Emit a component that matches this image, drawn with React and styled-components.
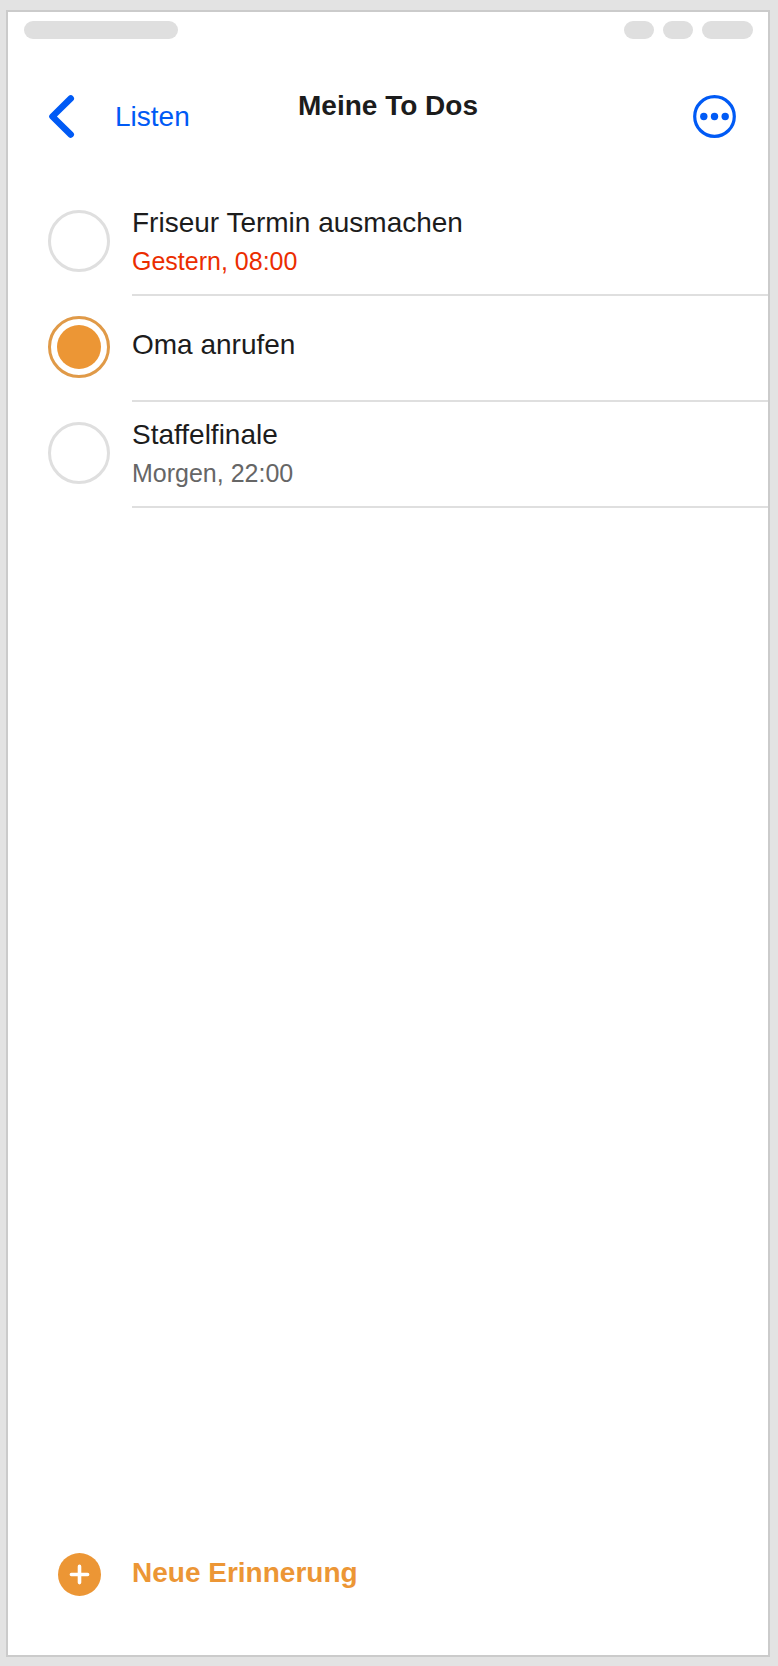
import React, { useState } from 'react';
import styled, { createGlobalStyle } from 'styled-components';

const GlobalStyle = createGlobalStyle`
  * {
    box-sizing: border-box;
  }
  body {
    margin: 0;
    background: #e3e3e3;
    color: #1c1c1c;
    font-family: "Liberation Sans", Arial, Helvetica, sans-serif;
    font-size: 28px;
    line-height: 32px;
  }
`;

const Page = styled.div`
  display: flex;
  min-height: 100vh;
  padding: 10px 8px 9px 6px;
`;

const Screen = styled.div`
  flex: 1;
  display: flex;
  flex-direction: column;
  background: #fff;
  border: 2px solid #cbcbcb;
`;

const StatusBar = styled.div`
  display: flex;
  gap: 9px;
  padding: 9px 15px 0 16px;
`;

const Pill = styled.span`
  width: ${(props) => props.$width}px;
  height: 18px;
  border-radius: 9px;
  background: #dfdfdf;
`;

const Spacer = styled.span`
  flex: 1;
`;

const Header = styled.header`
  display: grid;
  grid-template-columns: 1fr auto 1fr;
  align-items: start;
  padding: 56px 32px 52px 40px;
`;

const BackLink = styled.a`
  display: flex;
  align-items: center;
  gap: 40px;
  color: #005af5;
  text-decoration: none;
`;

const Title = styled.h1`
  margin: 0;
  padding-right: 8px;
  font-size: 28px;
  line-height: 22px;
  font-weight: bold;
`;

const IconButton = styled.button`
  display: flex;
  justify-self: end;
  padding: 0;
  border: none;
  background: none;
  color: #005af5;
  cursor: pointer;
`;

const List = styled.ul`
  margin: 0;
  padding: 0 0 0 40px;
  list-style: none;
`;

const Row = styled.li`
  display: flex;
  align-items: flex-start;
  gap: 22px;
`;

const Check = styled.input`
  appearance: none;
  flex: none;
  width: 62px;
  height: 62px;
  margin: 20px 0 0;
  padding: 6px;
  border: 3px solid #dfdfdf;
  border-radius: 50%;
  cursor: pointer;

  &:checked {
    border-color: #e09a48;
    background: #ec9635 content-box;
  }
`;

const RowLabel = styled.label`
  flex: 1;
  display: flex;
  flex-direction: column;
  justify-content: center;
  gap: 12px;
  height: 106px;
  padding-bottom: 6px;
  border-bottom: 2px solid #dfdfdf;
`;

const Due = styled.span`
  color: ${(props) => (props.$overdue ? '#eb2d00' : '#666')};
  font-size: 25px;
  line-height: 20px;
`;

const Footer = styled.footer`
  margin-top: auto;
  padding: 0 50px 59px;
`;

const AddButton = styled.button`
  display: flex;
  align-items: center;
  gap: 31px;
  padding: 0;
  border: none;
  background: none;
  color: #ec9635;
  font: inherit;
  font-weight: bold;
  cursor: pointer;
`;

const AddText = styled.span`
  padding-bottom: 4px;
`;

const todos = [
  { id: 'friseur', text: 'Friseur Termin ausmachen', due: 'Gestern, 08:00', overdue: true },
  { id: 'oma', text: 'Oma anrufen', done: true },
  { id: 'staffel', text: 'Staffelfinale', due: 'Morgen, 22:00' },
];

function ChevronIcon() {
  return (
    <svg width="27" height="43" viewBox="0 0 27 43" fill="none" aria-hidden="true">
      <path
        d="M22.8 3.4 4.4 21.5l18.4 18.1"
        stroke="currentColor"
        strokeWidth="6.4"
        strokeLinecap="round"
        strokeLinejoin="round"
      />
    </svg>
  );
}

function MoreIcon() {
  return (
    <svg width="43" height="43" viewBox="0 0 43 43" fill="currentColor" aria-hidden="true">
      <circle cx="21.5" cy="21.5" r="19.8" fill="none" stroke="currentColor" strokeWidth="3.2" />
      <circle cx="10.8" cy="21.5" r="3.7" />
      <circle cx="21.5" cy="21.5" r="3.7" />
      <circle cx="32.2" cy="21.5" r="3.7" />
    </svg>
  );
}

function PlusIcon() {
  return (
    <svg width="43" height="43" viewBox="0 0 43 43" aria-hidden="true">
      <circle cx="21.5" cy="21.5" r="21.5" fill="currentColor" />
      <path d="M21.5 13.4v16.2M13.4 21.5h16.2" stroke="#fff" strokeWidth="3.6" strokeLinecap="round" />
    </svg>
  );
}

function Todo({ todo }) {
  const [done, setDone] = useState(Boolean(todo.done));

  return (
    <Row>
      <Check
        type="checkbox"
        id={todo.id}
        checked={done}
        onChange={(e) => setDone(e.target.checked)}
      />
      <RowLabel htmlFor={todo.id}>
        <span>{todo.text}</span>
        {todo.due && <Due $overdue={todo.overdue}>{todo.due}</Due>}
      </RowLabel>
    </Row>
  );
}

function App() {
  return (
    <>
      <GlobalStyle />
      <Page>
        <Screen>
          <StatusBar>
            <Pill $width={154} />
            <Spacer />
            <Pill $width={30} />
            <Pill $width={30} />
            <Pill $width={51} />
          </StatusBar>
          <Header>
            <BackLink href="#listen">
              <ChevronIcon />
              Listen
            </BackLink>
            <Title>Meine To Dos</Title>
            <IconButton type="button" aria-label="Mehr">
              <MoreIcon />
            </IconButton>
          </Header>
          <main>
            <List>
              {todos.map((todo) => (
                <Todo key={todo.id} todo={todo} />
              ))}
            </List>
          </main>
          <Footer>
            <AddButton type="button">
              <PlusIcon />
              <AddText>Neue Erinnerung</AddText>
            </AddButton>
          </Footer>
        </Screen>
      </Page>
    </>
  );
}

export default App;
